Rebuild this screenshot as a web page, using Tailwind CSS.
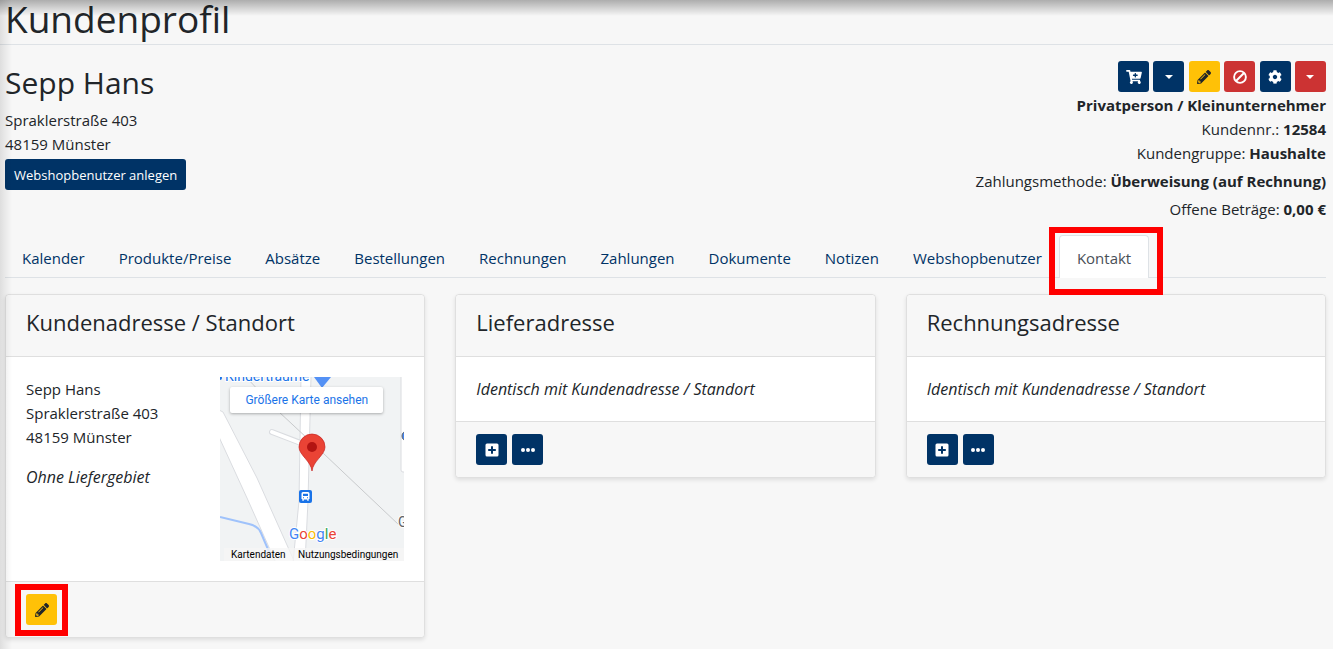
<!DOCTYPE html>
<html lang="de">
<head>
<meta charset="utf-8">
<meta name="viewport" content="width=device-width, initial-scale=1">
<title>Kundenprofil</title>
<script src="https://cdn.jsdelivr.net/npm/@tailwindcss/browser@4"></script>
</head>
<body class="relative min-h-screen overflow-x-hidden bg-[#f7f7f7] font-['Open_Sans','Noto_Sans',sans-serif] text-[15px] leading-6 text-[#212529]">

<!-- shared icons -->
<svg class="hidden" aria-hidden="true">
  <symbol id="i-cart" viewBox="0 0 576 512"><path fill="currentColor" d="M504.717 320H211.572l6.545 32h268.418c15.401 0 26.816 14.301 23.403 29.319l-5.517 24.276C523.112 414.668 536 433.828 536 456c0 31.202-25.519 56.444-56.824 55.994-29.823-.429-54.35-24.631-55.155-54.447-.44-16.287 6.085-31.049 16.803-41.548H231.176C241.553 426.165 248 440.326 248 456c0 31.813-26.528 57.431-58.67 55.938-28.54-1.325-51.751-24.385-53.251-52.917-1.158-22.034 10.436-41.455 28.051-51.586L93.883 64H24C10.745 64 0 53.255 0 40V24C0 10.745 10.745 0 24 0h102.529c11.401 0 21.228 8.021 23.513 19.19L159.208 64H551.99c15.401 0 26.816 14.301 23.403 29.319l-47.273 208C525.637 312.246 515.923 320 504.717 320zM408 168h-48v-40c0-8.837-7.163-16-16-16h-16c-8.837 0-16 7.163-16 16v40h-48c-8.837 0-16 7.163-16 16v16c0 8.837 7.163 16 16 16h48v40c0 8.837 7.163 16 16 16h16c8.837 0 16-7.163 16-16v-40h48c8.837 0 16-7.163 16-16v-16c0-8.837-7.163-16-16-16z"/></symbol>
  <symbol id="i-pencil" viewBox="0 0 512 512"><path fill="currentColor" d="M497.9 142.1l-46.1 46.1c-4.7 4.7-12.3 4.7-17 0l-111-111c-4.7-4.7-4.7-12.3 0-17l46.1-46.1c18.7-18.7 49.1-18.7 67.9 0l60.1 60.1c18.8 18.7 18.8 49.1 0 67.9zM284.2 99.8L21.6 362.4.4 483.9c-2.9 16.4 11.4 30.6 27.8 27.8l121.5-21.3 262.6-262.6c4.7-4.7 4.7-12.3 0-17l-111-111c-4.8-4.7-12.4-4.7-17.1 0zM124.1 339.9c-5.5-5.5-5.5-14.3 0-19.8l154-154c5.5-5.5 14.3-5.5 19.8 0s5.5 14.3 0 19.8l-154 154c-5.5 5.5-14.3 5.5-19.8 0zM88 424h48v36.3l-64.5 11.3-31.1-31.1L51.7 376H88v48z"/></symbol>
  <symbol id="i-ban" viewBox="0 0 14 14"><g fill="none" stroke="currentColor" stroke-width="1.9"><circle cx="7" cy="7" r="5.9"/><path d="M11 3L3 11"/></g></symbol>
  <symbol id="i-cog" viewBox="0 0 512 512"><path fill="currentColor" d="M487.4 315.7l-42.6-24.6c4.3-23.2 4.3-47 0-70.2l42.6-24.6c4.9-2.8 7.1-8.6 5.5-14-11.1-35.6-30-67.8-54.7-94.6-3.8-4.1-10-5.1-14.8-2.3L380.8 110c-17.9-15.4-38.5-27.3-60.8-35.1V25.8c0-5.6-3.9-10.5-9.4-11.7-36.7-8.2-74.3-7.8-109.2 0-5.5 1.2-9.4 6.1-9.4 11.7V75c-22.2 7.9-42.8 19.8-60.8 35.1L88.7 85.5c-4.9-2.8-11-1.9-14.8 2.3-24.7 26.7-43.6 58.9-54.7 94.6-1.7 5.4.6 11.2 5.5 14L67.3 221c-4.3 23.2-4.3 47 0 70.2l-42.6 24.6c-4.9 2.8-7.1 8.6-5.5 14 11.1 35.6 30 67.8 54.7 94.6 3.8 4.1 10 5.1 14.8 2.3l42.6-24.6c17.9 15.4 38.5 27.3 60.8 35.1v49.2c0 5.6 3.9 10.5 9.4 11.7 36.7 8.2 74.3 7.8 109.2 0 5.5-1.2 9.4-6.1 9.4-11.7v-49.2c22.2-7.9 42.8-19.8 60.8-35.1l42.6 24.6c4.9 2.8 11 1.9 14.8-2.3 24.7-26.7 43.6-58.9 54.7-94.6 1.5-5.5-.7-11.3-5.6-14.1zM256 336c-44.1 0-80-35.9-80-80s35.9-80 80-80 80 35.9 80 80-35.9 80-80 80z"/></symbol>
  <symbol id="i-caret" viewBox="0 0 8 4"><path fill="currentColor" d="M0 0h8L4 4z"/></symbol>
  <symbol id="i-plus" viewBox="0 0 14 14"><path fill="currentColor" fill-rule="evenodd" d="M2 .5h10A1.5 1.5 0 0 1 13.500 2v10a1.500 1.500 0 0 1-1.500 1.500H2A1.500 1.500 0 0 1 .5 12V2A1.500 1.500 0 0 1 2 .5zM6 3.200V6H3.200v2H6v2.800h2V8h2.800V6H8V3.200z"/></symbol>
  <symbol id="i-dots" viewBox="0 0 14 4"><g fill="currentColor"><circle cx="2" cy="2" r="2"/><circle cx="7" cy="2" r="2"/><circle cx="12" cy="2" r="2"/></g></symbol>
</svg>

<header class="border-b border-[#dee2e6] px-[5px] pb-[6px]">
  <h1 class="text-[37px] leading-[38px]">Kundenprofil</h1>
</header>

<main class="px-[5px] pr-[7px] pt-4">
  <section class="flex justify-between">
    <div>
      <h2 class="mb-[3px] text-[30px] leading-11">Sepp Hans</h2>
      <p>Spraklerstraße 403</p>
      <p>48159 Münster</p>
      <button type="button" class="mt-[3px] block h-[31px] rounded-[3px] bg-[#003366] px-[9px] text-[13px] text-white">Webshopbenutzer anlegen</button>
    </div>
    <div class="text-right">
      <div class="ml-auto flex w-[208px] justify-between">
        <button type="button" aria-label="Bestellung anlegen" class="flex size-[31px] items-center justify-center rounded-[3px] bg-[#003366] text-white"><svg class="h-[14px] w-4"><use href="#i-cart"/></svg></button>
        <button type="button" aria-label="Weitere Optionen" class="flex size-[31px] items-center justify-center rounded-[3px] bg-[#003366] text-white"><svg class="h-1 w-2"><use href="#i-caret"/></svg></button>
        <button type="button" aria-label="Bearbeiten" class="flex size-[31px] items-center justify-center rounded-[3px] bg-[#ffc107] text-[#212529]"><svg class="size-[14px]"><use href="#i-pencil"/></svg></button>
        <button type="button" aria-label="Sperren" class="flex size-[31px] items-center justify-center rounded-[3px] bg-[#cc3333] text-white"><svg class="size-[14px]"><use href="#i-ban"/></svg></button>
        <button type="button" aria-label="Einstellungen" class="flex size-[31px] items-center justify-center rounded-[3px] bg-[#003366] text-white"><svg class="size-[14px]"><use href="#i-cog"/></svg></button>
        <button type="button" aria-label="Weitere Aktionen" class="flex size-[31px] items-center justify-center rounded-[3px] bg-[#cc3333] text-white"><svg class="h-1 w-2"><use href="#i-caret"/></svg></button>
      </div>
      <p class="mt-px font-bold">Privatperson / Kleinunternehmer</p>
      <p>Kundennr.: <b>12584</b></p>
      <p>Kundengruppe: <b>Haushalte</b></p>
      <p class="mt-1">Zahlungsmethode: <b>Überweisung (auf Rechnung)</b></p>
      <p class="mt-1">Offene Beträge: <b>0,00 €</b></p>
    </div>
  </section>

  <nav class="mt-[14px] flex border-b border-[#dee2e6] text-[#003366]">
    <a href="#" class="px-[17px] pb-[7px] pt-[11px]">Kalender</a>
    <a href="#" class="px-[17px] pb-[7px] pt-[11px]">Produkte/Preise</a>
    <a href="#" class="px-[17px] pb-[7px] pt-[11px]">Absätze</a>
    <a href="#" class="px-[17px] pb-[7px] pt-[11px]">Bestellungen</a>
    <a href="#" class="px-[17px] pb-[7px] pt-[11px]">Rechnungen</a>
    <a href="#" class="px-[17px] pb-[7px] pt-[11px]">Zahlungen</a>
    <a href="#" class="px-[17px] pb-[7px] pt-[11px]">Dokumente</a>
    <a href="#" class="px-[17px] pb-[7px] pt-[11px]">Notizen</a>
    <a href="#" class="px-[17px] pb-[7px] pt-[11px]">Webshopbenutzer</a>
    <a href="#" aria-current="page" class="relative -mb-px rounded-t border border-b-0 border-[#dee2e6] bg-white px-[17px] pb-2 pt-[10px] text-[#495057]">Kontakt<span class="pointer-events-none absolute -left-[11px] -top-[9px] h-[68px] w-[114px] border-6 border-[#ff0000]"></span></a>
  </nav>

  <section class="mt-4 grid grid-cols-3 items-start gap-[30px]">
    <article class="rounded border border-[#dfdfdf] bg-white shadow-[0_2px_4px_rgba(0,0,0,0.1)]">
      <h3 class="rounded-t border-b border-[#dfdfdf] bg-[#f7f7f7] px-5 pb-[18px] pt-[11px] text-[22px] leading-8">Kundenadresse / Standort</h3>
      <div class="flex justify-between p-5">
        <div>
          <p>Sepp Hans</p>
          <p>Spraklerstraße 403</p>
          <p>48159 Münster</p>
          <p class="mt-4 text-base italic">Ohne Liefergebiet</p>
        </div>
        <div class="relative size-[184px] overflow-hidden bg-[#f1f3f4] font-[Roboto,sans-serif]">
          <svg class="block size-full" viewBox="0 0 184 184" font-family="Roboto, sans-serif">
            <g fill="#fff" stroke="#dadce0">
              <path d="M-1 33L3 35 37 101 71 177 75 186H56L27 121-1 60z"/>
              <path d="M81 -1H91L88 124 85 186H73L79 124z"/>
              <path d="M181 -1V93a2 2 0 0 0 2 2h3V-1z"/>
            </g>
            <path d="M52 55L81 66" stroke="#dadce0" stroke-width="6" stroke-linecap="round"/>
            <path d="M52 55L83 67" stroke="#fff" stroke-width="4" stroke-linecap="round"/>
            <path d="M26 0L58 34 103 76 179 148" fill="none" stroke="#c8cacc"/>
            <path d="M0 140L29 147Q38 149 41 156L50 177" fill="none" stroke="#9fc2fb" stroke-width="2"/>
            <text x="5" y="4" font-size="14" fill="#1a73e8" stroke="#fff" stroke-width="2" paint-order="stroke">Kinderträume</text>
            <circle cx="0" cy="1" r="2" fill="#1a73e8"/>
            <path d="M94 0H111L102 11z" fill="#5491f5"/>
            <circle cx="187" cy="59" r="5" fill="#4285f4" stroke="#5f6368"/>
            <text x="178" y="150" font-size="14" fill="#5f6368" stroke="#fff" stroke-width="2" paint-order="stroke">G</text>
            <path d="M92 94C91 84 79 78 79 70a13 13 0 0 1 26 0C105 78 93 84 92 94z" fill="#ea4335" stroke="#c5221f" stroke-width=".7"/>
            <circle cx="92" cy="70" r="5" fill="#b31412"/>
            <rect x="79" y="113" width="13" height="13" rx="2" fill="#1a73e8"/>
            <path fill="#fff" fill-rule="evenodd" d="M83 115h5q1.500 0 1.500 1.500V122h-.8v1.800h-1.500V122.500h-3.400v1.300h-1.500V122h-.8v-5.500Q81.500 115 83 115zM83 116.800v2.200h5v-2.200zM83 120.200v1h1v-1zM87 120.200v1h1v-1z"/>
            <rect x="4" y="171" width="180" height="13" fill="#f5f5f5" fill-opacity=".75"/>
            <text x="69" y="162" font-size="15" stroke="#fff" stroke-width="2" paint-order="stroke"><tspan fill="#4285f4">G</tspan><tspan fill="#ea4335">o</tspan><tspan fill="#fbbc04">o</tspan><tspan fill="#4285f4">g</tspan><tspan fill="#34a853">l</tspan><tspan fill="#ea4335">e</tspan></text>
            <text x="11" y="181" font-size="10" fill="#000">Kartendaten</text>
            <text x="78" y="181" font-size="10" fill="#000">Nutzungsbedingungen</text>
          </svg>
          <a href="#" class="absolute left-[10px] top-[10px] flex h-[26px] w-[153px] items-center justify-center rounded-[2px] bg-white text-[12px] text-[#1a73e8] shadow-[0_1px_3px_rgba(0,0,0,0.3)]">Größere Karte ansehen</a>
        </div>
      </div>
      <div class="rounded-b border-t border-[#dfdfdf] bg-[#f7f7f7] px-5 py-3">
        <button type="button" aria-label="Kundenadresse bearbeiten" class="relative flex size-[31px] items-center justify-center rounded-[3px] bg-[#ffc107] text-[#212529]"><svg class="size-[14px]"><use href="#i-pencil"/></svg><span class="pointer-events-none absolute -left-[11px] -top-[10px] h-[52px] w-[53px] border-6 border-[#ff0000]"></span></button>
      </div>
    </article>

    <article class="rounded border border-[#dfdfdf] bg-white shadow-[0_2px_4px_rgba(0,0,0,0.1)]">
      <h3 class="rounded-t border-b border-[#dfdfdf] bg-[#f7f7f7] px-5 pb-[18px] pt-[11px] text-[22px] leading-8">Lieferadresse</h3>
      <p class="p-5 text-base italic">Identisch mit Kundenadresse / Standort</p>
      <div class="flex gap-[5px] rounded-b border-t border-[#dfdfdf] bg-[#f7f7f7] px-5 py-3">
        <button type="button" aria-label="Lieferadresse hinzufügen" class="flex size-[31px] items-center justify-center rounded-[3px] bg-[#003366] text-white"><svg class="size-[14px]"><use href="#i-plus"/></svg></button>
        <button type="button" aria-label="Mehr" class="flex size-[31px] items-center justify-center rounded-[3px] bg-[#003366] text-white"><svg class="h-1 w-[14px]"><use href="#i-dots"/></svg></button>
      </div>
    </article>

    <article class="rounded border border-[#dfdfdf] bg-white shadow-[0_2px_4px_rgba(0,0,0,0.1)]">
      <h3 class="rounded-t border-b border-[#dfdfdf] bg-[#f7f7f7] px-5 pb-[18px] pt-[11px] text-[22px] leading-8">Rechnungsadresse</h3>
      <p class="p-5 text-base italic">Identisch mit Kundenadresse / Standort</p>
      <div class="flex gap-[5px] rounded-b border-t border-[#dfdfdf] bg-[#f7f7f7] px-5 py-3">
        <button type="button" aria-label="Rechnungsadresse hinzufügen" class="flex size-[31px] items-center justify-center rounded-[3px] bg-[#003366] text-white"><svg class="size-[14px]"><use href="#i-plus"/></svg></button>
        <button type="button" aria-label="Mehr" class="flex size-[31px] items-center justify-center rounded-[3px] bg-[#003366] text-white"><svg class="h-1 w-[14px]"><use href="#i-dots"/></svg></button>
      </div>
    </article>
  </section>
</main>

<!-- shadows cast by the surrounding frame -->
<div class="pointer-events-none absolute inset-x-0 top-0 h-4 bg-linear-to-b from-black/30 to-transparent"></div>
<div class="pointer-events-none absolute inset-y-0 left-0 w-3 bg-linear-to-r from-black/10 to-transparent"></div>
</body>
</html>
